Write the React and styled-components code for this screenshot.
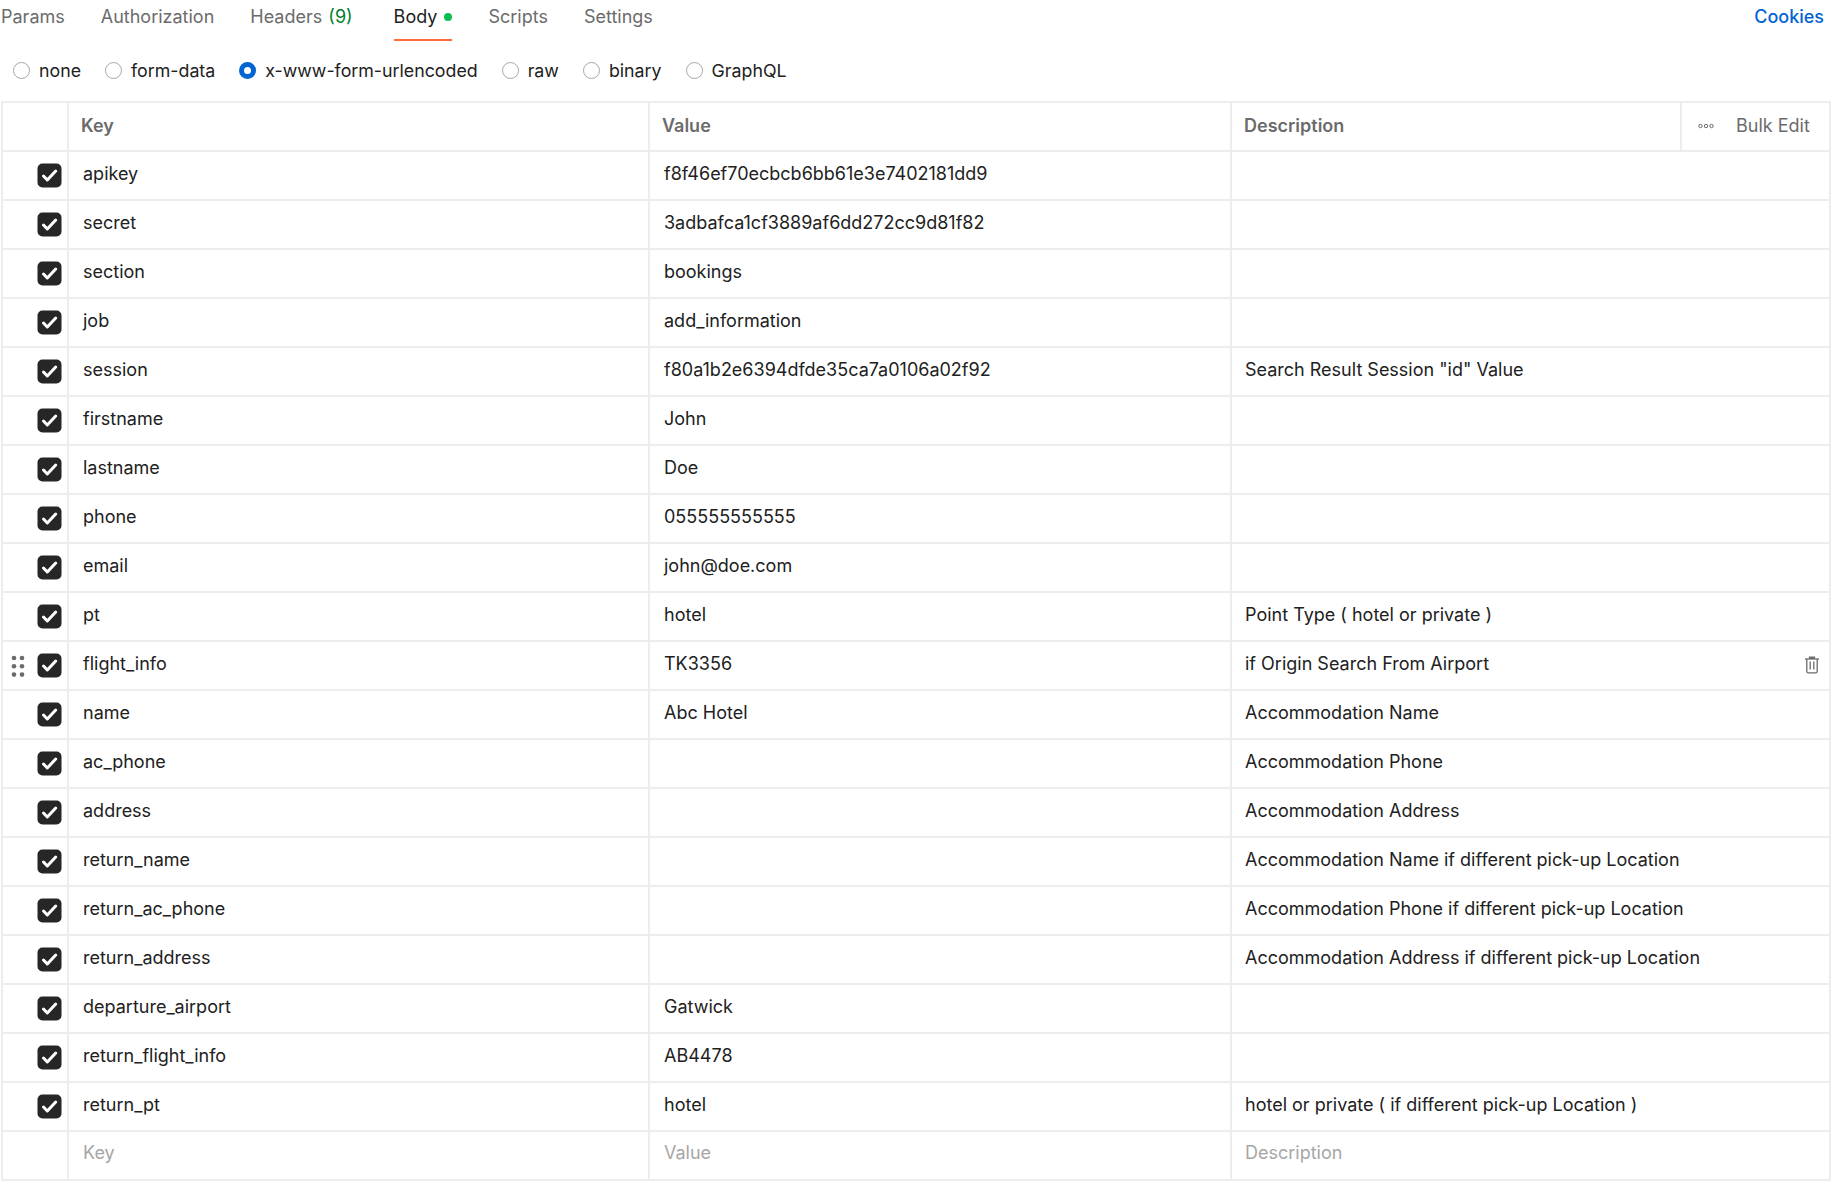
import React from "react";
import styled, { createGlobalStyle } from "styled-components";

const GlobalStyle = createGlobalStyle`
  html, body {
    margin: 0;
    padding: 0;
    background: #ffffff;
  }
  body {
    font-family: Inter, "Noto Sans", sans-serif;
    font-size: 18px;
    color: #212121;
  }
`;

const Page = styled.div`
  width: 1843px;
  height: 1203px;
  overflow: hidden;
`;

const TabBar = styled.div`
  display: flex;
  align-items: flex-start;
  height: 41px;
  padding: 0 19px 0 1px;
`;

const Tab = styled.div`
  display: flex;
  align-items: center;
  gap: 7px;
  height: 41px;
  margin-right: ${(props) => props.$gap || 36}px;
  padding-bottom: 6px;
  box-sizing: border-box;
  color: ${(props) => (props.$active ? "#212121" : "#6b6b6b")};
  border-bottom: 2px solid ${(props) => (props.$active ? "#ff6c37" : "transparent")};
`;

const Count = styled.span`
  color: #007f31;
  margin-left: 1px;
`;

const Dot = styled.span`
  width: 8px;
  height: 8px;
  border-radius: 50%;
  background: #0cbb52;
`;

const CookiesLink = styled.div`
  margin-left: auto;
  height: 33px;
  display: flex;
  align-items: center;
  color: #0265d2;
  font-weight: 500;
`;

const RadioBar = styled.div`
  display: flex;
  align-items: center;
  height: 60px;
  padding-left: 13px;
  padding-bottom: 1px;
  box-sizing: border-box;
  font-size: 17.8px;
`;

const RadioItem = styled.label`
  display: flex;
  align-items: center;
  gap: 9px;
  margin-right: 24px;
  color: #212121;
`;

const RadioMark = styled.span`
  box-sizing: border-box;
  width: 17px;
  height: 17px;
  border-radius: 50%;
  background: #fff;
  border: ${(props) => (props.$checked ? "5px solid #0265d2" : "1px solid #a6a6a6")};
`;

const Table = styled.div`
  width: 1830px;
  margin-left: 1px;
  border-top: 2px solid #ededed;
  border-left: 2px solid #ededed;
  border-right: 2px solid #ededed;
  box-sizing: border-box;
`;

const Row = styled.div`
  display: grid;
  grid-template-columns: 64px 581px 582px 1fr;
  height: 49px;
  box-sizing: border-box;
  border-bottom: 2px solid #ededed;
`;

const Cell = styled.div`
  display: flex;
  align-items: center;
  padding-left: ${(props) => (props.$wide ? 13 : 14)}px;
  padding-bottom: ${(props) => (props.$placeholder ? "6px" : "4px")};
  border-left: 2px solid #ededed;
  color: ${(props) => (props.$placeholder ? "#a6a6a6" : "#212121")};
  white-space: nowrap;
`;

const HeadCell = styled(Cell)`
  padding-left: 12px;
  padding-bottom: 2px;
  color: #6b6b6b;
  font-weight: 600;
`;

const DescriptionHead = styled(HeadCell)`
  padding-left: 0;
  padding-bottom: 0;
  align-items: stretch;
  justify-content: space-between;
`;

const DescriptionLabel = styled.span`
  display: flex;
  align-items: center;
  padding: 0 0 2px 12px;
`;

const BulkCell = styled.div`
  display: flex;
  align-items: center;
  box-sizing: border-box;
  width: 149px;
  padding: 0 18px 2px 16px;
  gap: 22px;
  border-left: 2px solid #ededed;
  color: #6b6b6b;
  font-weight: 400;
`;

const CheckCell = styled.div`
  position: relative;
  display: flex;
  align-items: center;
  justify-content: flex-end;
  padding-right: 5px;
  padding-bottom: 1px;
`;

const Grip = styled.svg`
  position: absolute;
  left: 8px;
  top: 13px;
`;

const DescriptionCell = styled(Cell)`
  position: relative;
`;

const Trash = styled.svg`
  position: absolute;
  right: 9px;
  top: 14px;
`;

const CheckBox = () => (
  <svg width="25" height="25" viewBox="0 0 25 25">
    <rect x="0.5" y="0.5" width="24" height="24" rx="5" fill="#262626" />
    <path d="M6.5 13l3.8 4 8.4-9" fill="none" stroke="#fff" strokeWidth="3" strokeLinecap="round" strokeLinejoin="round" />
  </svg>
);

const radios = ["none", "form-data", "x-www-form-urlencoded", "raw", "binary", "GraphQL"];

const rows = [
  ["apikey", "f8f46ef70ecbcb6bb61e3e7402181dd9", ""],
  ["secret", "3adbafca1cf3889af6dd272cc9d81f82", ""],
  ["section", "bookings", ""],
  ["job", "add_information", ""],
  ["session", "f80a1b2e6394dfde35ca7a0106a02f92", 'Search Result Session "id" Value'],
  ["firstname", "John", ""],
  ["lastname", "Doe", ""],
  ["phone", "055555555555", ""],
  ["email", "john@doe.com", ""],
  ["pt", "hotel", "Point Type ( hotel or private )"],
  ["flight_info", "TK3356", "if Origin Search From Airport"],
  ["name", "Abc Hotel", "Accommodation Name"],
  ["ac_phone", "", "Accommodation Phone"],
  ["address", "", "Accommodation Address"],
  ["return_name", "", "Accommodation Name if different pick-up Location"],
  ["return_ac_phone", "", "Accommodation Phone if different pick-up Location"],
  ["return_address", "", "Accommodation Address if different pick-up Location"],
  ["departure_airport", "Gatwick", ""],
  ["return_flight_info", "AB4478", ""],
  ["return_pt", "hotel", "hotel or private ( if different pick-up Location )"],
];

const App = () => {
  return (
    <Page>
      <GlobalStyle />
      <TabBar>
        <Tab>Params</Tab>
        <Tab>Authorization</Tab>
        <Tab $gap={41}>
          <span>
            Headers <Count>(9)</Count>
          </span>
        </Tab>
        <Tab $active>
          Body
          <Dot />
        </Tab>
        <Tab>Scripts</Tab>
        <Tab>Settings</Tab>
        <CookiesLink>Cookies</CookiesLink>
      </TabBar>
      <RadioBar>
        {radios.map((r) => (
          <RadioItem key={r}>
            <RadioMark $checked={r === "x-www-form-urlencoded"} />
            {r}
          </RadioItem>
        ))}
      </RadioBar>
      <Table>
        <Row>
          <CheckCell />
          <HeadCell>Key</HeadCell>
          <HeadCell>Value</HeadCell>
          <DescriptionHead>
            <DescriptionLabel>Description</DescriptionLabel>
            <BulkCell>
              <svg width="16" height="6" viewBox="0 0 16 6">
                <circle cx="2.5" cy="3" r="1.7" fill="none" stroke="#6b6b6b" />
                <circle cx="8" cy="3" r="1.7" fill="none" stroke="#6b6b6b" />
                <circle cx="13.5" cy="3" r="1.7" fill="none" stroke="#6b6b6b" />
              </svg>
              Bulk Edit
            </BulkCell>
          </DescriptionHead>
        </Row>
        {rows.map(([key, value, description]) => (
          <Row key={key}>
            <CheckCell>
              {key === "flight_info" && (
                <Grip width="14" height="23" viewBox="0 0 14 23">
                  {[3, 11.3, 19.6].map((cy) => (
                    <React.Fragment key={cy}>
                      <circle cx="3" cy={cy} r="2.3" fill="#6b6b6b" />
                      <circle cx="11" cy={cy} r="2.3" fill="#6b6b6b" />
                    </React.Fragment>
                  ))}
                </Grip>
              )}
              <CheckBox />
            </CheckCell>
            <Cell>{key}</Cell>
            <Cell>{value}</Cell>
            <DescriptionCell $wide>
              {description}
              {key === "flight_info" && (
                <Trash width="16" height="18" viewBox="0 0 16 18" fill="none" stroke="#6b6b6b" strokeWidth="1.3">
                  <path d="M1 3h14" />
                  <path d="M5.5 3V1.2h5V3" fill="#6b6b6b" />
                  <path d="M2.8 3v12.4c0 .9.6 1.5 1.5 1.5h7.4c.9 0 1.5-.6 1.5-1.5V3" />
                  <path d="M6.2 5.5v8M9.8 5.5v8" />
                </Trash>
              )}
            </DescriptionCell>
          </Row>
        ))}
        <Row>
          <CheckCell />
          <Cell $placeholder>Key</Cell>
          <Cell $placeholder>Value</Cell>
          <Cell $placeholder $wide>Description</Cell>
        </Row>
      </Table>
    </Page>
  );
};

export default App;
